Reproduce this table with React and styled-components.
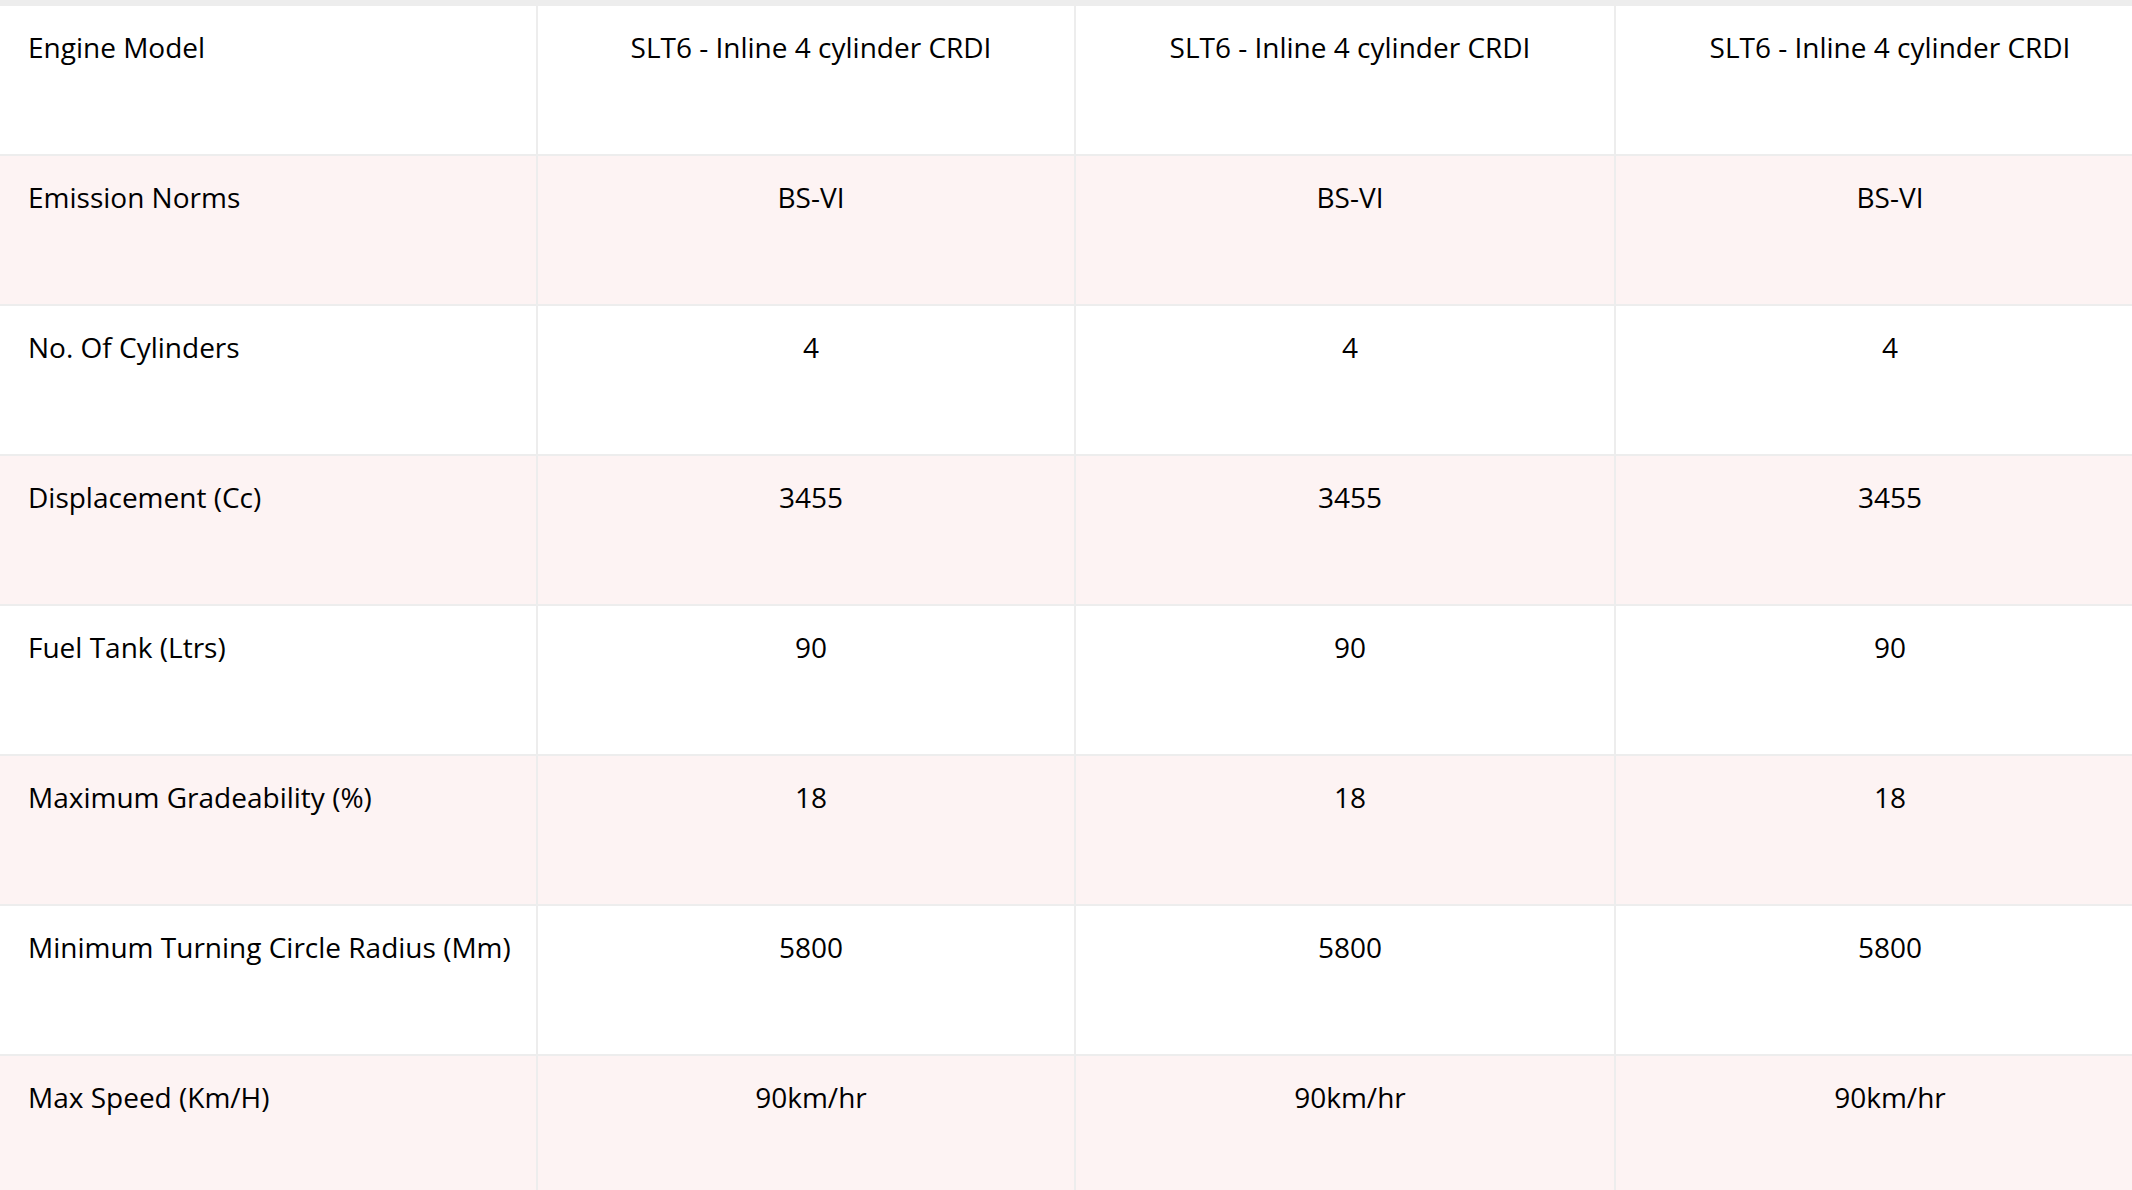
import React from 'react';
import styled, { createGlobalStyle } from 'styled-components';

const specs = [
  { label: "Engine Model", value: "SLT6 - Inline 4 cylinder CRDI" },
  { label: "Emission Norms", value: "BS-VI" },
  { label: "No. Of Cylinders", value: "4" },
  { label: "Displacement (Cc)", value: "3455" },
  { label: "Fuel Tank (Ltrs)", value: "90" },
  { label: "Maximum Gradeability (%)", value: "18" },
  { label: "Minimum Turning Circle Radius (Mm)", value: "5800" },
  { label: "Max Speed (Km/H)", value: "90km/hr" },
]

const variants = 3;

const App = () => {
  return (
    <>
      <GlobalStyle />
      <Wrapper>
        <Table>
          {specs.map((item, index) => (
            <Row key={index} striped={index % 2 === 1}>
              <LabelCell>{item.label}</LabelCell>
              {Array.from({ length: variants }).map((_, i) => (
                <ValueCell key={i}>{item.value}</ValueCell>
              ))}
            </Row>
          ))}
        </Table>
      </Wrapper>
    </>
  );
}

export default App;

const GlobalStyle = createGlobalStyle`
  html, body {
    margin: 0;
    padding: 0;
    background: #fff;
  }
  body {
    font-family: 'Open Sans', sans-serif;
    color: #000;
  }
`;

const Wrapper = styled.div`
  width: 100%;
  overflow: hidden;
`;

const Table = styled.div`
  width: 2156px;
  border-top: 6px solid #ededed;
`;

const Row = styled.div`
  display: grid;
  grid-template-columns: 536px repeat(3, 540px);
  background-color: ${props => (props.striped ? '#fdf3f3' : '#fff')};
  border-bottom: 2px solid #ededed;
`;

const Cell = styled.div`
  box-sizing: border-box;
  height: 148px;
  padding: 20px 28px;
  font-size: 28px;
  line-height: 42px;
`;

const LabelCell = styled(Cell)`
  text-align: left;
  padding: 20px 8px 20px 28px;
  white-space: nowrap;
`;

const ValueCell = styled(Cell)`
  text-align: center;
  padding: 20px 22px 20px 32px;
  border-left: 2px solid #ededed;
  border-right: 2px solid #ededed;
  & + & {
    border-left: 0;
  }
`;
